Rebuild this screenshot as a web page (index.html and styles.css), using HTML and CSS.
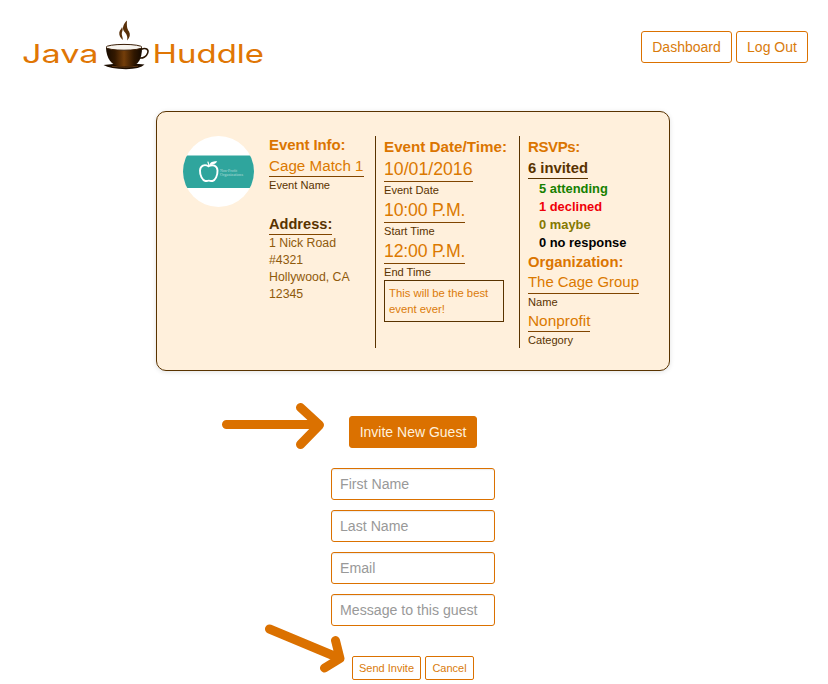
FILE: index.html
```html
<!DOCTYPE html>
<html lang="en">
<head>
<meta charset="utf-8">
<title>Java Huddle</title>
<link rel="stylesheet" href="styles.css">
</head>
<body>
<header class="header">
  <svg class="logo" width="244" height="56" viewBox="20 16 244 56" role="img" aria-label="Java Huddle">
    <defs>
      <linearGradient id="coffee"><stop offset="0" stop-color="#170b00"/><stop offset=".25" stop-color="#341900"/><stop offset=".5" stop-color="#743e0a"/><stop offset=".78" stop-color="#301700"/><stop offset="1" stop-color="#140900"/></linearGradient>
    </defs>
    <text class="logo-text" x="22" y="62.800" textLength="76.500" lengthAdjust="spacingAndGlyphs">Java</text>
    <text class="logo-text" x="152.500" y="62.800" textLength="111.500" lengthAdjust="spacingAndGlyphs">Huddle</text>
    <path d="M122.900 40C120.200 37.500 119 35.500 119.300 32.500C119.700 30 121.800 29 122 27C123.300 29 122.500 31 121.900 32.500C121.200 35 122.900 37 122.900 40Z" fill="#583009"/>
    <path d="M127 40.500C130 37.500 130.600 34.500 129 31.500C127 28.500 126.600 26 127 20.500C123.200 24 121.800 28.500 124.200 31.500C126.700 34.500 128 36.500 127 40.500Z" fill="#583009"/>
    <path d="M103.500 65Q126 62.500 144.500 64.500Q140 69 126 69.200Q110 69 103.500 65Z" fill="#1c0d00"/>
    <path d="M112 66.400Q126 68.200 138 66.200" fill="none" stroke="#70431c" stroke-width=".8"/>
    <path d="M106 48C106.500 59 112 64.500 118 66.500H132C138 64.500 142 59 142 48Z" fill="url(#coffee)"/>
    <ellipse cx="124" cy="47.300" rx="18" ry="2.900" fill="#f8f4ee" stroke="#3a1e06" stroke-width="1"/>
    <path d="M141 49.500C146 47 149 49.500 147.700 53C146.600 56.500 143 58.500 139.500 58" fill="none" stroke="#2a1603" stroke-width="1.500"/>
  </svg>
  <nav class="nav">
    <button class="btn dashboard">Dashboard</button>
    <button class="btn logout">Log Out</button>
  </nav>
</header>

<section class="card">
  <svg class="avatar" width="71" height="71" viewBox="0 0 71 71">
    <defs><clipPath id="round"><circle cx="35.500" cy="35.500" r="35.500"/></clipPath></defs>
    <g clip-path="url(#round)">
      <rect width="71" height="71" fill="#fff"/>
      <rect y="19.500" width="71" height="32.500" fill="#2fa59d"/>
    </g>
    <path d="M25.500 30.300C21.500 27.800 17.300 29.500 17 34.500C16.800 39.500 19.500 44.500 22.300 45C24 45.300 24.600 44.600 25.800 44.600C27 44.600 28 45.300 29.500 45C32.300 44.300 34.700 39.500 34.500 34.500C34.300 29.500 29.500 28 25.500 30.300Z" fill="none" stroke="#fff" stroke-width="1.900"/>
    <path d="M26.200 30L24.800 25.600" stroke="#fff" stroke-width="1.200"/>
    <path d="M26.500 29C27 26 30 25.200 34.200 25.300C33 28 30 29 26.500 29Z" fill="#fff"/>
    <text class="avatar-text" x="37" y="35.500" textLength="17" lengthAdjust="spacingAndGlyphs">Non-Profit</text>
    <text class="avatar-text" x="37" y="39.600" textLength="23" lengthAdjust="spacingAndGlyphs">Organizations</text>
  </svg>

  <div class="column info">
    <h2 class="heading compact">Event Info:</h2>
    <div class="value">Cage Match 1</div>
    <div class="label">Event Name</div>
    <h3 class="address-title">Address:</h3>
    <address class="address">1 Nick Road<br>#4321<br>Hollywood, CA<br>12345</address>
  </div>

  <div class="column schedule">
    <h2 class="heading wide">Event Date/Time:</h2>
    <div class="value large">10/01/2016</div>
    <div class="label">Event Date</div>
    <div class="value large time">10:00 P.M.</div>
    <div class="label">Start Time</div>
    <div class="value large time">12:00 P.M.</div>
    <div class="label">End Time</div>
    <p class="note">This will be the best event ever!</p>
  </div>

  <div class="column guests">
    <h2 class="heading short">RSVPs:</h2>
    <div class="invited">6 invited</div>
    <ul class="rsvps">
      <li class="attending">5 attending</li>
      <li class="declined">1 declined</li>
      <li class="maybe">0 maybe</li>
      <li class="none">0 no response</li>
    </ul>
    <h2 class="heading organization">Organization:</h2>
    <div class="value org">The Cage Group</div>
    <div class="label">Name</div>
    <div class="value org type">Nonprofit</div>
    <div class="label">Category</div>
  </div>
</section>

<form class="invite">
  <button type="button" class="btn primary">Invite New Guest</button>
  <div class="fields">
    <input class="field" placeholder="First Name">
    <input class="field" placeholder="Last Name">
    <input class="field" placeholder="Email">
    <input class="field" placeholder="Message to this guest">
  </div>
  <div class="actions">
    <button type="button" class="btn small send">Send Invite</button>
    <button type="button" class="btn small cancel">Cancel</button>
  </div>
</form>

<svg class="pointer" width="828" height="684" aria-hidden="true">
  <path d="M226.500 424.500H318M300.500 407.500L319.500 425L300.500 444.500"/>
  <path d="M269.500 629L339 658M335.500 640.500L340 658.500L324.500 668"/>
</svg>
</body>
</html>
```

FILE: styles.css
```css
* { box-sizing: border-box; }

body {
  margin: 0;
  height: 684px;
  overflow: hidden;
  position: relative;
  background: #fff;
  font-family: "Liberation Sans", Arial, sans-serif;
  font-size: 14px;
  color: #593300;
}

h2, h3, p, ul { margin: 0; padding: 0; }

.header {
  display: flex;
  justify-content: space-between;
  height: 111px;
  padding: 16px 20px 0;
}
.logo-text {
  font-family: Inter, sans-serif;
  font-size: 25.3px;
  fill: #e07604;
}
.nav { display: flex; gap: 4px; padding-top: 15px; }

.btn {
  height: 32px;
  padding: 0;
  border: 1px solid #db7100;
  border-radius: 3px;
  background: #fff;
  color: #d97b0b;
  font: 14px "Liberation Sans", Arial, sans-serif;
  white-space: nowrap;
}
.dashboard { width: 91px; }
.logout { width: 72px; }

.card {
  display: flex;
  width: 514px;
  height: 260px;
  margin-left: 156px;
  padding: 24px 0 0 26px;
  border: 1px solid #593300;
  border-radius: 10px;
  background: #fff0dc;
  box-shadow: 0 1px 5px rgba(0, 0, 0, .12);
}
.avatar { flex: none; }
.avatar-text { font-family: "Liberation Serif", serif; font-size: 4.5px; fill: #b3ddd8; }

.column {
  display: flex;
  flex-direction: column;
  align-items: flex-start;
  height: 212px;
  white-space: nowrap;
}
.info { width: 106px; margin-left: 15px; }
.schedule { width: 144px; padding-left: 8px; border-left: 1px solid #593300; }
.guests { width: 140px; padding-left: 8px; border-left: 1px solid #593300; }

.heading { font-size: 15px; line-height: 21px; color: #db7500; }
.heading.compact { line-height: 18px; letter-spacing: -.1px; }
.heading.wide { font-size: 15.2px; }
.heading.short { letter-spacing: -.4px; }
.heading.organization { font-size: 14.8px; line-height: 20px; }

.value {
  border-bottom: 1px solid #804500;
  font-size: 15.2px;
  line-height: 21px;
  color: #db7900;
}
.compact + .value { margin-top: 1px; }
.value.large { font-size: 17.7px; line-height: 24px; }
.value.time { letter-spacing: -.2px; }
.value.org { font-size: 14.9px; line-height: 21px; }
.value.type { font-size: 15.4px; }

.label { font-size: 11.1px; line-height: 16px; }

.address-title {
  margin-top: 21px;
  border-bottom: 1px solid #804500;
  font-size: 14.6px;
  line-height: 20px;
}
.address { font-size: 12.3px; font-style: normal; line-height: 17px; color: #8f5a0b; }

.note {
  width: 120px;
  height: 42px;
  padding: 4px;
  border: 1px solid #593300;
  font-size: 11.3px;
  line-height: 16px;
  color: #db7b09;
  white-space: normal;
}

.invited {
  margin-top: 2px;
  border-bottom: 1px solid #593300;
  font-size: 14.8px;
  font-weight: bold;
  line-height: 19px;
}
.rsvps {
  margin: 1px 0 0 11px;
  list-style: none;
  font-size: 12.9px;
  font-weight: bold;
  line-height: 18px;
}
.attending { color: #168000; }
.declined { color: #f00008; }
.maybe { color: #857800; }
.none { color: #000; }

.invite {
  display: flex;
  flex-direction: column;
  align-items: center;
  width: 164px;
  margin: 45px 0 0 331px;
}
.primary { width: 128px; background: #db7100; color: #fff0dc; }
.fields { display: flex; flex-direction: column; gap: 10px; margin-top: 20px; }
.field {
  width: 164px;
  height: 32px;
  padding: 0 8px;
  border: 1px solid #db7100;
  border-radius: 3px;
  box-shadow: inset 0 1px 1px rgba(0, 0, 0, .08);
  font: 14.15px "Liberation Sans", Arial, sans-serif;
}
.field::placeholder { color: #999; }
.actions { display: flex; gap: 4px; margin-top: 30px; }
.btn.small { height: 24px; border-radius: 2px; font-size: 11px; }
.send { width: 69px; }
.cancel { width: 49px; }

.pointer {
  position: absolute;
  top: 0;
  left: 0;
  pointer-events: none;
  fill: none;
  stroke: #db7100;
  stroke-width: 9px;
  stroke-linecap: round;
  stroke-linejoin: round;
}
```
